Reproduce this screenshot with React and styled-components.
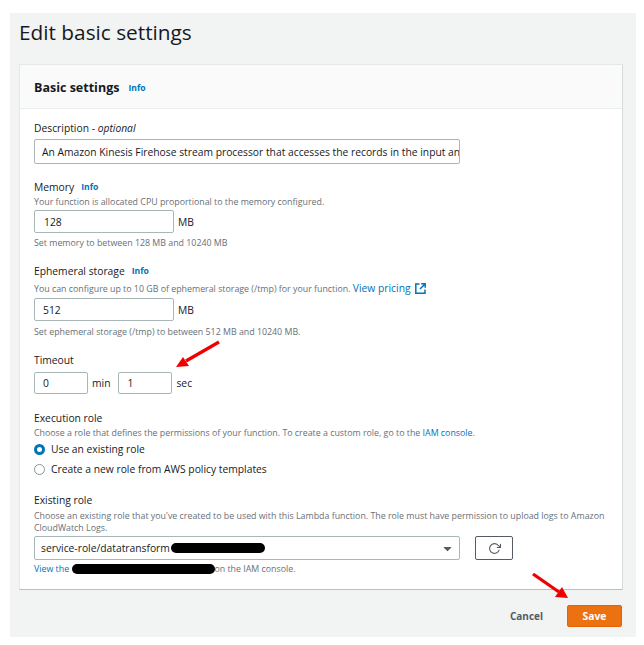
import React from "react";
import styled, { createGlobalStyle } from "styled-components";
import { FaCaretDown } from "react-icons/fa";
import { FiRotateCw } from "react-icons/fi";

const GlobalStyle = createGlobalStyle`
  html, body {
    margin: 0;
    padding: 0;
    background: #fff;
  }
  body {
    font-family: "Open Sans", "Noto Sans", "Liberation Sans", sans-serif;
    color: #16191f;
  }
`;

const Panel = styled.div`
  position: relative;
  box-sizing: border-box;
  width: 626px;
  height: 624px;
  margin: 13px 0 0 10px;
  padding: 0 13px 0 9px;
  background: #f2f3f3;
`;

const PageTitle = styled.h1`
  margin: 0;
  height: 51px;
  padding-top: 3px;
  box-sizing: border-box;
  font-size: 20.8px;
  line-height: 32px;
  font-weight: 400;
  color: #16191f;
`;

const Card = styled.section`
  box-sizing: border-box;
  height: 526px;
  background: #fff;
  border-right: 1px solid #d5dbdb;
  border-left: 1px solid #e4e8e8;
  border-bottom: 1px solid #b9c0c0;
  border-top: 1px solid #e4e8e8;
`;

const CardHeader = styled.header`
  box-sizing: border-box;
  height: 44px;
  padding: 2px 14px 0;
  display: flex;
  align-items: center;
  gap: 9px;
  background: #fafafa;
  border-bottom: 1px solid #eaeded;
`;

const CardTitle = styled.h2`
  margin: 0;
  font-size: 12.5px;
  font-weight: 700;
  color: #16191f;
`;

const Info = styled.a`
  font-size: 8.6px;
  font-weight: 700;
  color: #0073bb;
`;

const CardBody = styled.div`
  padding: 12px 14px 0;
`;

const Field = styled.div`
  margin-bottom: ${(p) => p.$gap}px;
`;

const Label = styled.div`
  display: flex;
  align-items: center;
  gap: 7px;
  height: 15px;
  font-size: 10.3px;
  line-height: 15px;
  color: #16191f;

  em {
    font-style: italic;
  }
`;

const Help = styled.div`
  font-size: 8.83px;
  line-height: 12px;
  color: #687078;
  margin-top: ${(p) => p.$top || 0}px;
  white-space: nowrap;
  width: 575px;

  a {
    color: #0073bb;
  }
`;

const Pricing = styled.a`
  display: inline-flex;
  align-items: center;
  gap: 4px;
  font-size: 10.3px;
  color: #0073bb;

  svg {
    display: block;
  }
`;

const InputRow = styled.div`
  display: flex;
  align-items: center;
  margin-top: ${(p) => p.$top || 0}px;
`;

const TextInput = styled.div`
  box-sizing: border-box;
  width: ${(p) => p.$w}px;
  height: ${(p) => p.$h || 23}px;
  padding-left: ${(p) => p.$pad || 8}px;
  display: flex;
  align-items: center;
  overflow: hidden;
  white-space: nowrap;
  background: #fff;
  border: 1px solid #aab7b8;
  border-radius: 2px;
  font-size: 10.3px;
  color: #16191f;
`;

const Unit = styled.span`
  margin: 0 ${(p) => p.$right || 0}px 0 4px;
  font-size: 10.3px;
  color: #16191f;
`;

const RadioRow = styled.label`
  display: flex;
  align-items: center;
  gap: 6px;
  height: 20px;
  font-size: 10.3px;
  color: #16191f;
`;

const Radio = styled.span`
  box-sizing: border-box;
  width: 11px;
  height: 11px;
  border-radius: 50%;
  background: #fff;
  border: ${(p) => (p.$on ? "3px solid #0073bb" : "1px solid #879596")};
`;

const Select = styled(TextInput)`
  position: relative;
  padding-left: 6px;
`;

const Caret = styled.span`
  position: absolute;
  right: 5px;
  top: 0;
  bottom: 0;
  display: flex;
  align-items: center;
  color: #545b64;
  font-size: 13px;
`;

const RefreshButton = styled.button`
  box-sizing: border-box;
  width: 38px;
  height: 24px;
  margin-left: 15px;
  padding: 0;
  display: grid;
  place-items: center;
  background: #fff;
  border: 1px solid #545b64;
  border-radius: 2px;
  color: #545b64;
`;

const Redact = styled.span`
  position: absolute;
  left: ${(p) => p.$x}px;
  top: ${(p) => p.$y}px;
  width: ${(p) => p.$w}px;
  height: ${(p) => p.$h}px;
  background: #000;
  border-radius: 5px;
`;

const Footer = styled.footer`
  display: flex;
  justify-content: flex-end;
  align-items: center;
  margin: 15px 1px 0 0;
  gap: 24px;
`;

const CancelButton = styled.button`
  all: unset;
  font-size: 10px;
  font-weight: 700;
  color: #545b64;
`;

const SaveButton = styled.button`
  box-sizing: border-box;
  width: 55px;
  height: 22px;
  padding: 0;
  background: #ec7211;
  border: 1px solid #eb5f07;
  border-radius: 2px;
  font-family: inherit;
  font-size: 10.3px;
  font-weight: 700;
  color: #fff;
`;

const Arrow = styled.svg`
  position: absolute;
  left: ${(p) => p.$x}px;
  top: ${(p) => p.$y}px;
`;

const ExternalIcon = () => (
  <svg width="11" height="11" viewBox="0 0 11 11" fill="none" stroke="#0073bb" strokeWidth="1.5">
    <path d="M4.5 1H.8v9.2H10V6.5" />
    <path d="M5 6l4.5-4.5M6.2 .8h4v4" />
  </svg>
);

const App = () => (
  <>
    <GlobalStyle />
    <Panel>
      <PageTitle>Edit basic settings</PageTitle>
      <Card>
        <CardHeader>
          <CardTitle>Basic settings</CardTitle>
          <Info>Info</Info>
        </CardHeader>
        <CardBody>
          <Field $gap={16}>
            <Label>
              <span>
                Description - <em>optional</em>
              </span>
            </Label>
            <InputRow $top={3}>
              <TextInput $w={426} $h={25} $pad={7}>
                An Amazon Kinesis Firehose stream processor that accesses the records in the input an
              </TextInput>
            </InputRow>
          </Field>

          <Field $gap={15}>
            <Label>
              Memory <Info>Info</Info>
            </Label>
            <Help $top={1}>Your function is allocated CPU proportional to the memory configured.</Help>
            <InputRow $top={2}>
              <TextInput $w={140} $pad={9}>128</TextInput>
              <Unit>MB</Unit>
            </InputRow>
            <Help $top={4}>Set memory to between 128 MB and 10240 MB</Help>
          </Field>

          <Field $gap={15}>
            <Label>
              Ephemeral storage <Info>Info</Info>
            </Label>
            <Help $top={3}>
              You can configure up to 10 GB of ephemeral storage (/tmp) for your function.{" "}
              <Pricing>
                View pricing <ExternalIcon />
              </Pricing>
            </Help>
            <InputRow $top={3}>
              <TextInput $w={140} $pad={8}>512</TextInput>
              <Unit>MB</Unit>
            </InputRow>
            <Help $top={5}>Set ephemeral storage (/tmp) to between 512 MB and 10240 MB.</Help>
          </Field>

          <Field $gap={17}>
            <Label>Timeout</Label>
            <InputRow $top={4}>
              <TextInput $w={54} $h={22}>0</TextInput>
              <Unit $right={8}>min</Unit>
              <TextInput $w={54} $h={22}>1</TextInput>
              <Unit>sec</Unit>
            </InputRow>
          </Field>

          <Field $gap={14}>
            <Label>Execution role</Label>
            <Help $top={1}>
              Choose a role that defines the permissions of your function. To create a custom role, go to the{" "}
              <a>IAM console</a>.
            </Help>
            <RadioRow>
              <Radio $on />
              Use an existing role
            </RadioRow>
            <RadioRow>
              <Radio />
              Create a new role from AWS policy templates
            </RadioRow>
          </Field>

          <Field $gap={0}>
            <Label>Existing role</Label>
            <Help $top={2}>
              Choose an existing role that you've created to be used with this Lambda function. The role must have
              permission to upload logs to Amazon
              <br />
              CloudWatch Logs.
            </Help>
            <InputRow $top={2}>
              <Select $w={426} $h={24}>
                service-role/datatransform
                <Caret>
                  <FaCaretDown />
                </Caret>
              </Select>
              <RefreshButton aria-label="Refresh">
                <FiRotateCw size={13} />
              </RefreshButton>
            </InputRow>
            <Help $top={3}>
              <a>View the</a> <span style={{ marginLeft: 143 }}>on the IAM console.</span>
            </Help>
          </Field>
        </CardBody>
      </Card>
      <Footer>
        <CancelButton>Cancel</CancelButton>
        <SaveButton>Save</SaveButton>
      </Footer>

      <Redact $x={161} $y={530} $w={94} $h={10} />
      <Redact $x={62} $y={551} $w={143} $h={10} />

      <Arrow $x={166} $y={326} width="46" height="34" viewBox="0 0 46 34">
        <path d="M43 3 10 22" stroke="#f00000" strokeWidth="3.2" />
        <path d="M0 28 7 18 13 27z" fill="#f00000" />
      </Arrow>
      <Arrow $x={520} $y={560} width="46" height="38" viewBox="0 0 46 38">
        <path d="M3 1 29 19" stroke="#f00000" strokeWidth="3.2" />
        <path d="M38 25 25 24 32 14z" fill="#f00000" />
      </Arrow>
    </Panel>
  </>
);

export default App;
